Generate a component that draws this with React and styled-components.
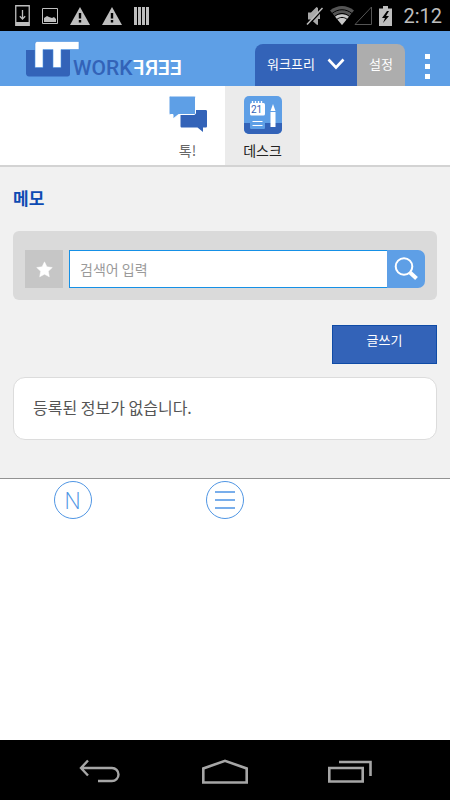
import React, { useState } from 'react';
import styled, { createGlobalStyle } from 'styled-components';

const GlobalStyle = createGlobalStyle`
  * {
    box-sizing: border-box;
  }
  body {
    margin: 0;
    background: #fff;
    font-family: 'Noto Sans CJK KR', sans-serif;
  }
  button,
  input {
    margin: 0;
    border: 0;
    font-family: inherit;
  }
  button {
    padding: 0;
    cursor: pointer;
  }
`;

const Screen = styled.div`
  display: flex;
  flex-direction: column;
  min-height: 100vh;
`;

const StatusBar = styled.div`
  display: flex;
  align-items: center;
  justify-content: space-between;
  height: 31px;
  padding: 0 8px 0 15px;
  background: #000;
`;

const StatusIcons = styled.div`
  display: flex;
  align-items: center;
  gap: ${(props) => props.$gap}px;

  svg {
    display: block;
  }
`;

const Clock = styled.span`
  margin-left: 4px;
  color: #bebebe;
  font-family: Roboto, sans-serif;
  font-size: 20px;
  line-height: 32px;
`;

const Header = styled.header`
  display: flex;
  align-items: flex-end;
  height: 55px;
  background: #5e9fe6;
`;

const Brand = styled.a`
  display: flex;
  align-items: flex-end;
  gap: 1px;
  margin-right: auto;
  padding: 0 0 9px 26px;
  text-decoration: none;

  svg {
    display: block;
    overflow: visible;
  }
`;

const BrandWord = styled.span`
  display: flex;
  color: ${(props) => props.$color};
  font-family: Roboto, sans-serif;
  font-size: 21px;
  font-weight: ${(props) => props.$weight};
  line-height: 18px;
`;

const FlippedLetter = styled.span`
  display: inline-block;
  transform: scaleX(-1);
`;

const HeaderButton = styled.button`
  display: flex;
  align-items: center;
  justify-content: center;
  gap: 12px;
  width: ${(props) => props.$width}px;
  height: 42px;
  padding-bottom: 2px;
  color: #fff;
  font-size: 13px;
  line-height: 20px;
  background: ${(props) => props.$color};
  border-radius: ${(props) => props.$radius};
`;

const MoreButton = styled.button`
  display: flex;
  flex-direction: column;
  align-items: center;
  gap: 5px;
  width: 45px;
  height: 32px;
  background: transparent;
`;

const Dot = styled.span`
  width: 5px;
  height: 5px;
  background: #fff;
`;

const TabBar = styled.nav`
  display: flex;
  justify-content: center;
  height: 81px;
  background: #fff;
  border-bottom: 2px solid #d3d3d3;
`;

const Tab = styled.button`
  display: flex;
  flex-direction: column;
  align-items: center;
  width: 75px;
  padding-top: 10px;
  color: ${(props) => (props.$active ? '#222' : '#666')};
  font-size: 14px;
  line-height: 20px;
  background: ${(props) => (props.$active ? '#ebebeb' : '#fff')};

  svg {
    display: block;
    margin-bottom: 6px;
  }
`;

const Main = styled.main`
  padding: 18px 13px 38px;
  background: #f1f1f1;
  border-bottom: 1px solid #929292;
`;

const Title = styled.h1`
  margin: 0 0 20px;
  color: #0d4bb3;
  font-size: 17px;
  font-weight: 700;
  line-height: 26px;
`;

const SearchForm = styled.form`
  display: flex;
  margin-bottom: 25px;
  padding: 19px 12px 12px;
  background: #dadada;
  border-radius: 6px;
`;

const StarButton = styled.button`
  display: flex;
  align-items: center;
  justify-content: center;
  width: 38px;
  height: 38px;
  margin-right: 6px;
  background: #c6c6c6;
`;

const SearchInput = styled.input`
  flex: 1;
  min-width: 0;
  height: 38px;
  padding: 0 10px;
  color: #444;
  font-size: 14px;
  background: #fff;
  border: 1px solid #1590e6;
  border-right: 0;
  border-radius: 0;
  outline: none;

  &::placeholder {
    color: #9a9a9a;
  }
`;

const SearchButton = styled.button`
  display: flex;
  align-items: center;
  justify-content: center;
  width: 38px;
  height: 38px;
  background: #5e9fe6;
  border-radius: 0 7px 7px 0;
`;

const WriteButton = styled.button`
  display: block;
  width: 105px;
  height: 39px;
  margin: 0 0 13px auto;
  padding-bottom: 10px;
  color: #fff;
  font-size: 13px;
  line-height: 20px;
  background: #3363b8;
  border: 1px solid #0f4ba6;
`;

const EmptyCard = styled.div`
  padding: 17px 19px 19px;
  color: #555;
  font-size: 16px;
  line-height: 25px;
  background: #fff;
  border: 1px solid #dcdcdc;
  border-radius: 12px;
`;

const QuickLinks = styled.div`
  display: grid;
  grid-template-columns: 29fr 32fr 29fr;
  justify-items: center;
  padding-top: 2px;
`;

const RoundButton = styled.button`
  display: flex;
  align-items: center;
  justify-content: center;
  width: 38px;
  height: 38px;
  color: #5096e4;
  font-family: 'Open Sans', sans-serif;
  font-size: 23px;
  font-weight: 300;
  line-height: 36px;
  background: #fff;
  border: 1px solid #5096e4;
  border-radius: 50%;
`;

const SystemNav = styled.div`
  display: grid;
  grid-template-columns: 200fr 50fr 200fr;
  align-items: center;
  height: 60px;
  margin-top: auto;
  padding-top: 2px;
  background: #000;
`;

const SystemButton = styled.button`
  display: flex;
  justify-content: center;
  background: transparent;

  svg {
    display: block;
  }
`;

const WarningIcon = () => (
  <svg width="20" height="18" viewBox="0 0 20 18">
    <path d="M10 0 20 18H0Z" fill="#bebebe" />
    <path d="M8.8 6h2.4v5.5H8.8zM8.8 13h2.4v2.4H8.8z" fill="#000" />
  </svg>
);

const DownloadIcon = () => (
  <svg width="15" height="21" viewBox="0 0 15 21">
    <path d="M.75.75h13.5v19.5H.75z" fill="none" stroke="#bebebe" strokeWidth="1.3" />
    <path d="M1 17h13v3.5H1z" fill="#bebebe" />
    <path d="M7.5 5v9M4.8 11.3l2.7 2.7 2.7-2.7" fill="none" stroke="#bebebe" strokeWidth="1.3" />
  </svg>
);

const PhotoIcon = () => (
  <svg width="16" height="16" viewBox="0 0 16 16">
    <path d="M.5.5h15v15H.5z" fill="none" stroke="#bebebe" />
    <path d="M2 14v-4l3-2 2 1 3 1 2-1 2 2v3z" fill="#bebebe" />
  </svg>
);

const BarsIcon = () => (
  <svg width="15" height="18" viewBox="0 0 15 18">
    <path d="M0 0h3v18H0zM4 0h3v18H4zM8 0h3v18H8zM12 0h3v18h-3z" fill="#bebebe" />
  </svg>
);

const MuteIcon = () => (
  <svg width="17" height="20" viewBox="0 0 17 20">
    <path d="M2 6.5h3L10.500 1l1.500 1v17l-1.500-.5L5 13.500H2z" fill="#a8a8a8" />
    <path d="M13 7v6" stroke="#a8a8a8" strokeWidth="2" />
    <path d="m17 3.5-15 16" stroke="#000" strokeWidth="1.500" />
    <path d="M16.500 2 1 18.500" stroke="#bebebe" strokeWidth="1.500" />
  </svg>
);

const WifiIcon = () => (
  <svg width="24" height="19" viewBox="0 0 24 19">
    <path d="M12 19 0 4.5C7-1.5 17-1.5 24 4.5Z" fill="#555" />
    <path d="M12 19 5 10.5c4-3 10-3 14 0Z" fill="#c8c8c8" />
    <path d="M2 7.5c6-5 14-5 20 0M4.5 10.5c4.5-4 10.5-4 15 0M7 13.3c3-2.5 7-2.5 10 0" fill="none" stroke="#000" />
  </svg>
);

const SignalIcon = () => (
  <svg width="18" height="19" viewBox="0 0 18 19">
    <path d="M17.5 1v17.5H1z" fill="none" stroke="#555" />
  </svg>
);

const BatteryIcon = () => (
  <svg width="13" height="20" viewBox="0 0 13 20">
    <path d="M0 2.5h4V0h5v2.5h4V20H0z" fill="#bebebe" />
    <path d="M8 5 3 12h3l-2 5 6-7H7l3-5z" fill="#000" />
  </svg>
);

// the white bar runs out over the first letters of the name
const LogoMark = () => (
  <svg width="46" height="36" viewBox="0 0 46 36">
    <path d="M0 9h44v24c0 1.5-1 2.5-2.5 2.5H3C1 35.5 0 34 0 32.5z" fill="#3363b8" />
    <path
      d="M11.5.5H53v8H35v18h-8v-18H17v18H9V3.500C9 1.500 10 .5 11.500.5z"
      fill="#fff"
      stroke="#4b91df"
      strokeWidth=".6"
    />
  </svg>
);

const ChevronIcon = () => (
  <svg width="18" height="12" viewBox="0 0 18 12">
    <path d="m1.500 1.500 7.500 8 7.500-8" fill="none" stroke="#fff" strokeWidth="2.600" />
  </svg>
);

const TalkIcon = () => (
  <svg width="38" height="38" viewBox="0 0 38 38">
    <path
      d="M13 14h23.5c1 0 1.5.5 1.5 1.5V30c0 1-.5 1.5-1.5 1.5H34V36l-5.500-4.500H13c-1 0-1.500-.5-1.500-1.500V15.500c0-1 .5-1.500 1.500-1.500z"
      fill="#3363b8"
    />
    <path
      d="M1.500 0H25c1 0 1.500.5 1.500 1.500v15.500c0 1-.5 1.500-1.500 1.500H9.500L4 23v-4.500H1.500C.5 18.500 0 18 0 17V1.500C0 .5.5 0 1.500 0z"
      fill="#5e9fe6"
      stroke="#fff"
    />
  </svg>
);

const DeskIcon = () => (
  <svg width="38" height="38" viewBox="0 0 38 38">
    <rect width="38" height="38" rx="5" fill="#5e9fe6" />
    <path d="M0 27h38v6a5 5 0 0 1-5 5H5a5 5 0 0 1-5-5z" fill="#3363b8" />
    <path d="M6 22h15v9.500c0 1-.5 1.500-1.500 1.500h-12C6.500 33 6 32.500 6 31.500z" fill="#5e9fe6" />
    <rect x="6" y="7" width="15" height="12.500" rx="1.500" fill="#fff" />
    <path d="M8.500 5v3M11.500 5v3M14.500 5v3M17.500 5v3" stroke="#fff" strokeWidth="1.400" />
    <text x="12.500" y="17" fill="#3363b8" fontFamily="Roboto, sans-serif" fontSize="10" textAnchor="middle">
      21
    </text>
    <path d="M8.500 25.500h10M8.500 29.500h10" stroke="#fff" />
    <path d="M26.500 16h5v15h-5zM26.500 15 29 8l2.500 7z" fill="#fff" />
  </svg>
);

const StarIcon = () => (
  <svg width="17" height="17" viewBox="0 0 17 17">
    <path
      d="m8.500.8 2.400 5 5.400.7-4 3.800 1 5.500-4.800-2.600-4.800 2.600 1-5.500-4-3.800 5.400-.7z"
      fill="#fff"
      stroke="#fff"
      strokeWidth=".5"
    />
  </svg>
);

const SearchIcon = () => (
  <svg width="24" height="24" viewBox="0 0 24 24">
    <circle cx="10" cy="9.500" r="8.300" fill="none" stroke="#fff" strokeWidth="2" />
    <path d="m16 15.500 6.500 6" stroke="#fff" strokeWidth="4" />
  </svg>
);

const LinesIcon = () => (
  <svg width="20" height="18" viewBox="0 0 20 18">
    <path d="M0 1h20M0 9h20M0 17h20" stroke="#79aeeb" strokeWidth="1.800" />
  </svg>
);

const BackIcon = () => (
  <svg width="42" height="24" viewBox="0 0 42 24">
    <path d="M1.500 9H33a6.500 6.500 0 0 1 0 13H19M9 1.500 2 9l7 7.500" fill="none" stroke="#a6a6a6" strokeWidth="2.400" />
  </svg>
);

const HomeIcon = () => (
  <svg width="46" height="25" viewBox="0 0 46 25">
    <path d="M1.300 23.500V9.500L23 1.800l21.700 7.700v14z" fill="none" stroke="#a6a6a6" strokeWidth="2.600" />
  </svg>
);

const RecentIcon = () => (
  <svg width="44" height="23" viewBox="0 0 44 23">
    <path d="M1.300 8h33.400v13.500H1.300zM11 2h31.500v14" fill="none" stroke="#a6a6a6" strokeWidth="2.600" />
  </svg>
);

const tabs = [
  { id: 'talk', label: '톡!', Icon: TalkIcon },
  { id: 'desk', label: '데스크', Icon: DeskIcon },
];

const App = () => {
  const [activeTab, setActiveTab] = useState('desk');
  const [keyword, setKeyword] = useState('');

  return (
    <Screen>
      <GlobalStyle />
      <StatusBar>
        <StatusIcons $gap={12}>
          <DownloadIcon />
          <PhotoIcon />
          <WarningIcon />
          <WarningIcon />
          <BarsIcon />
        </StatusIcons>
        <StatusIcons $gap={7}>
          <MuteIcon />
          <StatusIcons $gap={0}>
            <WifiIcon />
            <SignalIcon />
          </StatusIcons>
          <BatteryIcon />
          <Clock>2:12</Clock>
        </StatusIcons>
      </StatusBar>

      <Header>
        <Brand href="#home">
          <LogoMark />
          <BrandWord $color="#3363b8" $weight={500}>WORK</BrandWord>
          <BrandWord $color="#fff" $weight={500}>
            {'FREE'.split('').map((letter, index) => (
              <FlippedLetter key={index}>{letter}</FlippedLetter>
            ))}
          </BrandWord>
        </Brand>
        <HeaderButton $width={102} $color="#3363b8" $radius="8px 0 0 0">
          워크프리
          <ChevronIcon />
        </HeaderButton>
        <HeaderButton $width={48} $color="#adadad" $radius="0 8px 0 0">
          설정
        </HeaderButton>
        <MoreButton aria-label="더보기">
          <Dot />
          <Dot />
          <Dot />
        </MoreButton>
      </Header>

      <TabBar>
        {tabs.map(({ id, label, Icon }) => (
          <Tab key={id} $active={activeTab === id} onClick={() => setActiveTab(id)}>
            <Icon />
            {label}
          </Tab>
        ))}
      </TabBar>

      <Main>
        <Title>메모</Title>
        <SearchForm onSubmit={(event) => event.preventDefault()}>
          <StarButton type="button" aria-label="즐겨찾기">
            <StarIcon />
          </StarButton>
          <SearchInput
            aria-label="검색어 입력"
            placeholder="검색어 입력"
            value={keyword}
            onChange={(event) => setKeyword(event.target.value)}
          />
          <SearchButton type="submit" aria-label="검색">
            <SearchIcon />
          </SearchButton>
        </SearchForm>
        <WriteButton>글쓰기</WriteButton>
        <EmptyCard>등록된 정보가 없습니다.</EmptyCard>
      </Main>

      <QuickLinks>
        <RoundButton>N</RoundButton>
        <RoundButton aria-label="메뉴">
          <LinesIcon />
        </RoundButton>
      </QuickLinks>

      <SystemNav>
        <SystemButton aria-label="뒤로">
          <BackIcon />
        </SystemButton>
        <SystemButton aria-label="홈">
          <HomeIcon />
        </SystemButton>
        <SystemButton aria-label="최근 앱">
          <RecentIcon />
        </SystemButton>
      </SystemNav>
    </Screen>
  );
};

export default App;
